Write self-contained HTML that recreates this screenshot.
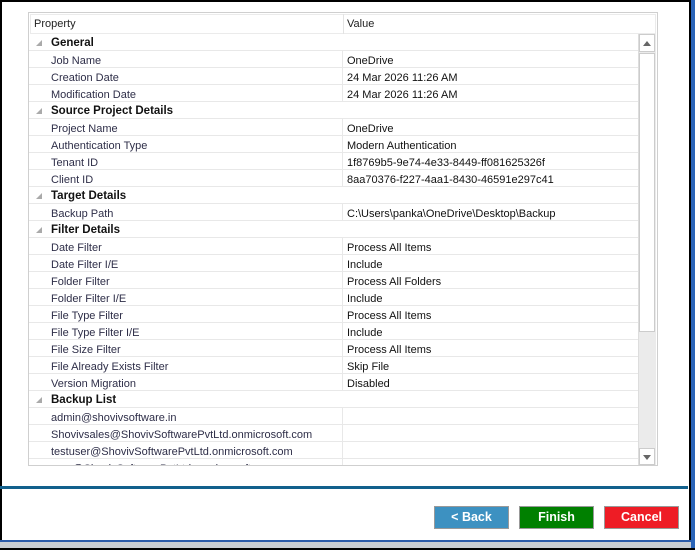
<!DOCTYPE html>
<html><head><style>
*{margin:0;padding:0;box-sizing:border-box}
html,body{width:695px;height:550px;overflow:hidden}
body{position:relative;background:#fff;font-family:"Liberation Sans",sans-serif;font-size:11px}
.abs{position:absolute}
.row{position:absolute;left:29px;width:609px;height:17px;border-bottom:1px solid #e8e8e8}
.row .p{position:absolute;left:22px;top:4px;color:#2e2e48;white-space:nowrap}
.row .v{position:absolute;left:318px;top:4px;color:#111;white-space:nowrap}
.row .sep{position:absolute;left:313px;top:0;bottom:-1px;border-left:1px solid #e8e8e8}
.row.h .p{font-weight:bold;font-size:11.5px;color:#111;top:3px}
.tri{position:absolute;left:7px;top:6px;width:0;height:0;border-left:6px solid transparent;border-bottom:6px solid #aaa}
.btn{position:absolute;top:506px;width:75px;height:23px;border:1px solid #999;color:#fff;font-weight:bold;font-size:12.5px;text-align:center;line-height:21px}
</style></head><body>
<div class="abs" style="left:0;top:0;width:695px;height:2px;background:#000"></div>
<div class="abs" style="left:0;top:0;width:2px;height:550px;background:#000"></div>
<div class="abs" style="left:689px;top:0;width:2px;height:550px;background:#000"></div>
<div class="abs" style="left:691px;top:0;width:4px;height:550px;background:#2a64b8"></div>
<div class="abs" style="left:0;top:540px;width:691px;height:2px;background:#2a5aa8"></div>
<div class="abs" style="left:0;top:542px;width:691px;height:6px;background:#c8ccd2"></div>
<div class="abs" style="left:0;top:548px;width:695px;height:2px;background:#000"></div>

<div class="abs" style="left:28px;top:12px;width:630px;height:454px;border:1px solid #cfcfcf"></div>
<div class="abs" style="left:30px;top:14px;width:626px;height:20px;border:1px solid #ebebeb"></div>
<div class="abs" style="left:343px;top:14px;height:20px;border-left:1px solid #e3e3e3"></div>
<div class="abs" style="left:34px;top:18px;color:#222">Property</div>
<div class="abs" style="left:347px;top:18px;color:#222">Value</div>

<div class="abs" style="left:29px;top:34px;width:609px;height:431px;overflow:hidden">
<div style="position:absolute;left:-29px;top:-34px;width:640px;height:465px">
<div class="row h" style="top:34px"><div class="tri"></div><div class="p">General</div></div>
<div class="row" style="top:51px"><div class="sep"></div><div class="p">Job Name</div><div class="v">OneDrive</div></div>
<div class="row" style="top:68px"><div class="sep"></div><div class="p">Creation Date</div><div class="v">24 Mar 2026 11:26 AM</div></div>
<div class="row" style="top:85px"><div class="sep"></div><div class="p">Modification Date</div><div class="v">24 Mar 2026 11:26 AM</div></div>
<div class="row h" style="top:102px"><div class="tri"></div><div class="p">Source Project Details</div></div>
<div class="row" style="top:119px"><div class="sep"></div><div class="p">Project Name</div><div class="v">OneDrive</div></div>
<div class="row" style="top:136px"><div class="sep"></div><div class="p">Authentication Type</div><div class="v">Modern Authentication</div></div>
<div class="row" style="top:153px"><div class="sep"></div><div class="p">Tenant ID</div><div class="v">1f8769b5-9e74-4e33-8449-ff081625326f</div></div>
<div class="row" style="top:170px"><div class="sep"></div><div class="p">Client ID</div><div class="v">8aa70376-f227-4aa1-8430-46591e297c41</div></div>
<div class="row h" style="top:187px"><div class="tri"></div><div class="p">Target Details</div></div>
<div class="row" style="top:204px"><div class="sep"></div><div class="p">Backup Path</div><div class="v">C:\Users\panka\OneDrive\Desktop\Backup</div></div>
<div class="row h" style="top:221px"><div class="tri"></div><div class="p">Filter Details</div></div>
<div class="row" style="top:238px"><div class="sep"></div><div class="p">Date Filter</div><div class="v">Process All Items</div></div>
<div class="row" style="top:255px"><div class="sep"></div><div class="p">Date Filter I/E</div><div class="v">Include</div></div>
<div class="row" style="top:272px"><div class="sep"></div><div class="p">Folder Filter</div><div class="v">Process All Folders</div></div>
<div class="row" style="top:289px"><div class="sep"></div><div class="p">Folder Filter I/E</div><div class="v">Include</div></div>
<div class="row" style="top:306px"><div class="sep"></div><div class="p">File Type Filter</div><div class="v">Process All Items</div></div>
<div class="row" style="top:323px"><div class="sep"></div><div class="p">File Type Filter I/E</div><div class="v">Include</div></div>
<div class="row" style="top:340px"><div class="sep"></div><div class="p">File Size Filter</div><div class="v">Process All Items</div></div>
<div class="row" style="top:357px"><div class="sep"></div><div class="p">File Already Exists Filter</div><div class="v">Skip File</div></div>
<div class="row" style="top:374px"><div class="sep"></div><div class="p">Version Migration</div><div class="v">Disabled</div></div>
<div class="row h" style="top:391px"><div class="tri"></div><div class="p">Backup List</div></div>
<div class="row" style="top:408px"><div class="sep"></div><div class="p">admin@shovivsoftware.in</div></div>
<div class="row" style="top:425px"><div class="sep"></div><div class="p">Shovivsales@ShovivSoftwarePvtLtd.onmicrosoft.com</div></div>
<div class="row" style="top:442px"><div class="sep"></div><div class="p">testuser@ShovivSoftwarePvtLtd.onmicrosoft.com</div></div>
<div class="row" style="top:459px"><div class="sep"></div><div class="p">user@ShovivSoftwarePvtLtd.onmicrosoft.com</div></div>
</div></div>

<div class="abs" style="left:638px;top:34px;width:18px;height:431px;background:#ebebeb;border-left:1px solid #ddd"></div>
<div class="abs" style="left:639px;top:34px;width:16px;height:18px;background:#fff;border:1px solid #ccc"></div>
<div class="abs" style="left:643px;top:41px;width:0;height:0;border-left:4px solid transparent;border-right:4px solid transparent;border-bottom:5px solid #666"></div>
<div class="abs" style="left:639px;top:53px;width:16px;height:279px;background:#fff;border:1px solid #ccc"></div>
<div class="abs" style="left:639px;top:448px;width:16px;height:17px;background:#fff;border:1px solid #ccc"></div>
<div class="abs" style="left:643px;top:455px;width:0;height:0;border-left:4px solid transparent;border-right:4px solid transparent;border-top:5px solid #666"></div>

<div class="abs" style="left:0;top:486px;width:688px;height:3px;background:#12608c"></div>

<div class="btn" style="left:434px;background:#3d91c1">&lt; Back</div>
<div class="btn" style="left:519px;background:#008000">Finish</div>
<div class="btn" style="left:604px;background:#ee1c25">Cancel</div>
</body></html>
